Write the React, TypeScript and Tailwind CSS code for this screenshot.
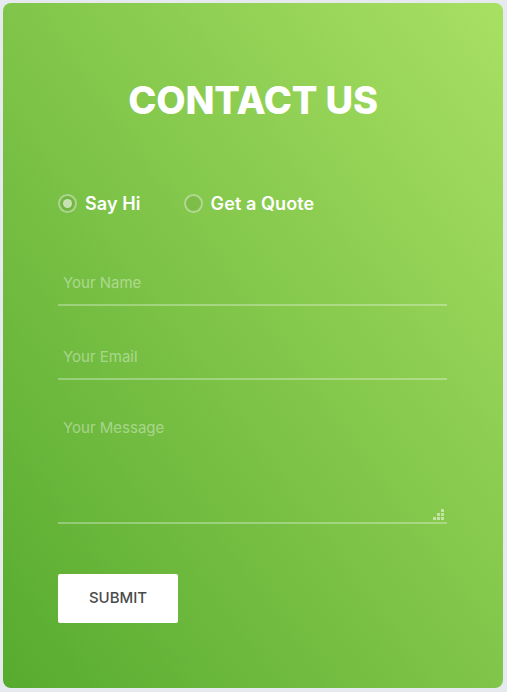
import { useState } from "react";

const font = { fontFamily: "Inter, 'Open Sans', sans-serif" };

function Radio({ label, checked, onClick }: { label: string; checked: boolean; onClick: () => void }) {
  return (
    <button type="button" onClick={onClick} className="flex items-center gap-[8px] text-white">
      <span className="flex h-[19px] w-[19px] items-center justify-center rounded-full border-2 border-white/40 bg-black/5">
        {checked && <span className="h-[9px] w-[9px] rounded-full bg-white/60" />}
      </span>
      <span className="text-[18px] font-semibold tracking-[0.1px]">{label}</span>
    </button>
  );
}

// dotted grip drawn in place of the browser's resize handle
function Grip() {
  const dots = [
    [8, 0],
    [8, 4],
    [4, 4],
    [8, 8],
    [4, 8],
    [0, 8],
  ];
  return (
    <div className="pointer-events-none absolute bottom-[4px] right-[3px] h-[11px] w-[11px]">
      {dots.map(([x, y]) => (
        <span
          key={`${x}-${y}`}
          className="absolute h-[3px] w-[3px] bg-white/50"
          style={{ left: x, top: y }}
        />
      ))}
    </div>
  );
}

export default function App() {
  const [kind, setKind] = useState("hi");

  return (
    <div className="min-h-[692px] w-full bg-[#e6eaee] p-[3px]" style={font}>
      <div className="h-[685px] w-[500px] rounded-[8px] bg-gradient-to-tr from-[#56ab2f] to-[#a8e063] px-[55px] pt-[74px]">
        <h1 className="text-center text-[38px] font-extrabold leading-[46px] tracking-[-0.2px] text-white">
          CONTACT US
        </h1>

        <div className="mt-[67px] flex gap-[43px]">
          <Radio label="Say Hi" checked={kind === "hi"} onClick={() => setKind("hi")} />
          <Radio label="Get a Quote" checked={kind === "quote"} onClick={() => setKind("quote")} />
        </div>

        <form className="mt-[43px] w-[389px]" onSubmit={(e) => e.preventDefault()}>
          <input
            placeholder="Your Name"
            className="block h-[46px] w-full border-b-2 border-white/30 bg-transparent px-[5px] text-[15px] text-white outline-none placeholder:text-white/40"
          />
          <input
            placeholder="Your Email"
            className="mt-[28px] block h-[46px] w-full border-b-2 border-white/30 bg-transparent px-[5px] text-[15px] text-white outline-none placeholder:text-white/40"
          />
          <div className="relative mt-[28px]">
            <textarea
              placeholder="Your Message"
              className="block h-[116px] w-full resize-none border-b-2 border-white/30 bg-transparent px-[5px] pt-[9px] text-[15px] text-white outline-none placeholder:text-white/40"
            />
            <Grip />
          </div>
          <button
            type="submit"
            className="mt-[50px] h-[49px] w-[120px] rounded-[2px] bg-white text-[15px] font-medium text-[#4a4a4a]"
          >
            SUBMIT
          </button>
        </form>
      </div>
    </div>
  );
}
